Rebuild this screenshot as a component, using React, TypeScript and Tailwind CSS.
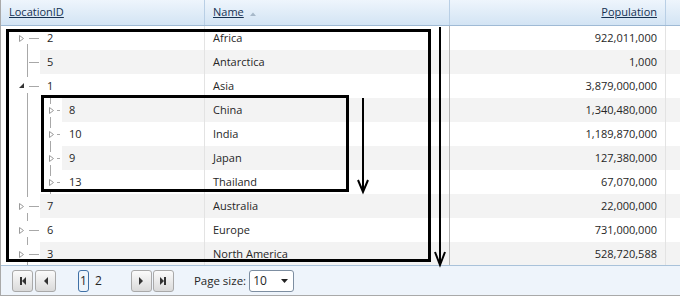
import React from "react";

type Row = {
  id: string;
  name: string;
  pop: string;
  level: 0 | 1;
  toggle?: "open" | "closed";
};

const ROWS: Row[] = [
  { id: "2", name: "Africa", pop: "922,011,000", level: 0, toggle: "closed" },
  { id: "5", name: "Antarctica", pop: "1,000", level: 0 },
  { id: "1", name: "Asia", pop: "3,879,000,000", level: 0, toggle: "open" },
  { id: "8", name: "China", pop: "1,340,480,000", level: 1, toggle: "closed" },
  { id: "10", name: "India", pop: "1,189,870,000", level: 1, toggle: "closed" },
  { id: "9", name: "Japan", pop: "127,380,000", level: 1, toggle: "closed" },
  { id: "13", name: "Thailand", pop: "67,070,000", level: 1, toggle: "closed" },
  { id: "7", name: "Australia", pop: "22,000,000", level: 0, toggle: "closed" },
  { id: "6", name: "Europe", pop: "731,000,000", level: 0, toggle: "closed" },
  { id: "3", name: "North America", pop: "528,720,588", level: 0, toggle: "closed" },
];

const LINE = "#a8a8a8";

// tree lines + expand toggle drawn in the indent area of the first column
function TreeLines({ row, index }: { row: Row; index: number }) {
  const w = row.level === 0 ? 39 : 61;
  const tx = row.level === 0 ? 18 : 48; // toggle left
  return (
    <svg width={w} height={24} className="shrink-0 block">
      {/* top level trunk */}
      {row.level === 0 && index === 0 && <line x1={26.5} y1={18} x2={26.5} y2={24} stroke={LINE} />}
      {row.level === 0 && index > 0 && row.toggle && (
        <>
          <line x1={26.5} y1={0} x2={26.5} y2={3} stroke={LINE} />
          <line x1={26.5} y1={19} x2={26.5} y2={24} stroke={LINE} />
        </>
      )}
      {row.level === 0 && !row.toggle && <line x1={26.5} y1={0} x2={26.5} y2={24} stroke={LINE} />}
      {row.level === 1 && <line x1={26.5} y1={0} x2={26.5} y2={24} stroke={LINE} />}

      {/* horizontal connector */}
      {row.level === 0 ? (
        <line x1={28} y1={12.5} x2={38} y2={12.5} stroke={LINE} />
      ) : (
        <>
          <line x1={56} y1={12.5} x2={59} y2={12.5} stroke={LINE} />
          <line x1={49.5} y1={0} x2={49.5} y2={6} stroke={LINE} />
          <line x1={49.5} y1={19} x2={49.5} y2={24} stroke={LINE} />
        </>
      )}

      {/* toggle */}
      {row.toggle === "closed" && (
        <polygon
          points={`${tx + 0.5},${9.5} ${tx + 0.5},${15.5} ${tx + 4.5},${12.5}`}
          fill="none"
          stroke="#9a9a9a"
        />
      )}
      {row.toggle === "open" && (
        <polygon points={`${tx + 5},${9} ${tx + 5},${14} ${tx},${14}`} fill="#333" />
      )}
    </svg>
  );
}

function PagerButton({ kind }: { kind: "first" | "prev" | "next" | "last" }) {
  return (
    <button className="w-[21px] h-[22px] flex items-center justify-center rounded-[3px] border border-[#a9a9a9] bg-gradient-to-b from-[#fbfbfb] to-[#dadada]">
      <svg width="10" height="10" viewBox="0 0 10 10">
        {kind === "first" && (
          <>
            <rect x="2" y="1" width="2" height="8" fill="#333" />
            <polygon points="8,1 8,9 4,5" fill="#333" />
          </>
        )}
        {kind === "prev" && <polygon points="7,1 7,9 3,5" fill="#333" />}
        {kind === "next" && <polygon points="3,1 3,9 7,5" fill="#333" />}
        {kind === "last" && (
          <>
            <polygon points="2,1 2,9 6,5" fill="#333" />
            <rect x="6" y="1" width="2" height="8" fill="#333" />
          </>
        )}
      </svg>
    </button>
  );
}

export default function App() {
  return (
    <div className="w-[680px] h-[300px] bg-white overflow-hidden" style={{ fontFamily: '"Open Sans", "Noto Sans", sans-serif' }}>
      <div className="relative w-[680px] h-[296px] border-l border-b border-[#a9a9a9] flex flex-col text-[11px] text-[#262626]">
        {/* ── Header ───────────────────────────── */}
        <div className="h-[26px] shrink-0 flex border-b border-[#9fbad5] bg-gradient-to-b from-[#eef5fc] to-[#d3e4f4] text-[#163252]">
          <div className="w-[204px] shrink-0 border-r border-[#b9cfe5] flex items-center pl-2">
            <span className="underline">LocationID</span>
          </div>
          <div className="w-[245px] shrink-0 border-r border-[#b9cfe5] flex items-center pl-[8px] gap-[6px]">
            <span className="underline">Name</span>
            <svg width="6" height="4" viewBox="0 0 6 4" className="mt-[2px]">
              <polygon points="0,4 3,0.5 6,4" fill="#a7b8c9" />
            </svg>
          </div>
          <div className="w-[216px] shrink-0 border-r border-[#b9cfe5] flex items-center justify-end pr-[8px]">
            <span className="underline">Population</span>
          </div>
          <div className="flex-1" />
        </div>

        {/* ── Body ─────────────────────────────── */}
        <div className="h-[239px] shrink-0 overflow-hidden">
          {ROWS.map((row, i) => {
            const bg = i % 2 === 1 ? "bg-[#f3f3f3]" : "bg-white";
            return (
              <div key={row.id} className="h-[24px] flex">
                <div className="w-[204px] shrink-0 flex border-r border-[#e3e3e3] bg-white">
                  <TreeLines row={row} index={i} />
                  <div className={`flex-1 flex items-center pl-[7px] ${bg}`}>{row.id}</div>
                </div>
                <div className={`w-[245px] shrink-0 border-r border-[#b4b4b4] flex items-center pl-[8px] ${bg}`}>
                  {row.name}
                </div>
                <div className={`w-[216px] shrink-0 border-r border-[#e3e3e3] flex items-center justify-end pr-[8px] ${bg}`}>
                  {row.pop}
                </div>
                <div className={`flex-1 ${bg}`} />
              </div>
            );
          })}
        </div>

        {/* ── Pager ────────────────────────────── */}
        <div className="flex-1 border-t border-[#a9c2da] bg-[#eef4fb] flex items-center pl-[11px]">
          <div className="flex gap-[2px]">
            <PagerButton kind="first" />
            <PagerButton kind="prev" />
          </div>
          <div className="flex items-center ml-[22px] gap-[6px] text-[12px]">
            <span className="w-[11px] h-[22px] rounded-[3px] border border-[#3f70a6] flex items-center justify-center">1</span>
            <span>2</span>
          </div>
          <div className="flex gap-[1px] ml-[29px]">
            <PagerButton kind="next" />
            <PagerButton kind="last" />
          </div>
          <span className="ml-[20px] text-[11.5px]">Page size:</span>
          <div className="ml-[3px] w-[45px] h-[22px] rounded-[3px] border border-[#7d8ea1] bg-white flex items-center justify-between pl-[3px] pr-[5px] text-[12px]">
            <span>10</span>
            <svg width="7" height="4" viewBox="0 0 7 4">
              <polygon points="0,0 7,0 3.5,4" fill="#222" />
            </svg>
          </div>
        </div>

        {/* ── Annotation overlay ───────────────── */}
        <div className="absolute left-[5px] top-[29px] w-[425px] h-[233px] border-[3px] border-black pointer-events-none" />
        <div className="absolute left-[40px] top-[95px] w-[308px] h-[97px] border-[3px] border-black pointer-events-none" />
        <svg className="absolute left-0 top-0 pointer-events-none" width="680" height="296">
          <line x1="362" y1="98" x2="362" y2="191" stroke="#000" strokeWidth="2" />
          <polyline points="357,180 362,192 367,180" fill="none" stroke="#000" strokeWidth="2" />
          <line x1="439" y1="27" x2="439" y2="264" stroke="#000" strokeWidth="2" />
          <polyline points="434,252 439,265 444,252" fill="none" stroke="#000" strokeWidth="2" />
        </svg>
      </div>
    </div>
  );
}
